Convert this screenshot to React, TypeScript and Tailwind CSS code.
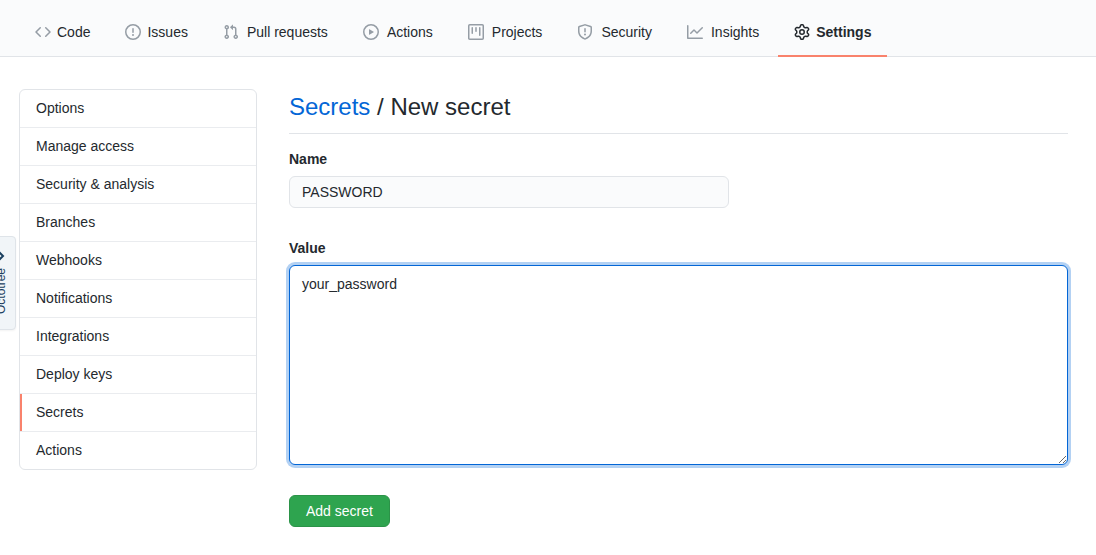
import { useState } from 'react';
import type { ReactNode } from 'react';

function Octicon({ children }: { children: ReactNode }) {
  return (
    <svg viewBox="0 0 16 16" width="16" height="16" fill="currentColor" fillRule="evenodd" aria-hidden="true" className="shrink-0">
      {children}
    </svg>
  );
}

const tabs: { label: string; gap: string; icon: ReactNode }[] = [
  {
    label: 'Code',
    gap: 'gap-1.5',
    icon: (
      <path d="M4.72 3.22a.75.75 0 011.06 1.06L2.06 8l3.72 3.72a.75.75 0 11-1.06 1.06L.47 8.53a.75.75 0 010-1.06l4.25-4.25zm6.56 0a.75.75 0 10-1.06 1.06L13.94 8l-3.72 3.72a.75.75 0 101.06 1.06l4.25-4.25a.75.75 0 000-1.06l-4.25-4.25z" />
    ),
  },
  {
    label: 'Issues',
    gap: 'gap-1.5',
    icon: (
      <path d="M8 1.5a6.5 6.5 0 100 13 6.5 6.5 0 000-13zM0 8a8 8 0 1116 0A8 8 0 010 8zm9 3a1 1 0 11-2 0 1 1 0 012 0zm-.25-6.25a.75.75 0 00-1.5 0v3.5a.75.75 0 001.5 0v-3.5z" />
    ),
  },
  {
    label: 'Pull requests',
    gap: 'gap-2',
    icon: (
      <path d="M7.177 3.073L9.573.677A.25.25 0 0110 .854v4.792a.25.25 0 01-.427.177L7.177 3.427a.25.25 0 010-.354zM3.75 2.5a.75.75 0 100 1.5.75.75 0 000-1.5zm-2.25.75a2.25 2.25 0 113 2.122v5.256a2.251 2.251 0 11-1.5 0V5.372A2.25 2.25 0 011.5 3.25zM11 2.5h-1V4h1a1 1 0 011 1v5.628a2.251 2.251 0 101.5 0V5A2.5 2.5 0 0011 2.5zm1 10.25a.75.75 0 111.5 0 .75.75 0 01-1.5 0zM3.75 12a.75.75 0 100 1.5.75.75 0 000-1.5z" />
    ),
  },
  {
    label: 'Actions',
    gap: 'gap-2',
    icon: (
      <path d="M1.5 8a6.5 6.5 0 1113 0 6.5 6.5 0 01-13 0zM8 0a8 8 0 100 16A8 8 0 008 0zM6.379 5.227A.25.25 0 006 5.442v5.117a.25.25 0 00.379.214l4.264-2.559a.25.25 0 000-.428L6.379 5.227z" />
    ),
  },
  {
    label: 'Projects',
    gap: 'gap-2',
    icon: (
      <path d="M1.75 0A1.75 1.75 0 000 1.75v12.5C0 15.216.784 16 1.75 16h12.5A1.75 1.75 0 0016 14.25V1.75A1.75 1.75 0 0014.25 0H1.75zM1.5 1.75a.25.25 0 01.25-.25h12.5a.25.25 0 01.25.25v12.5a.25.25 0 01-.25.25H1.75a.25.25 0 01-.25-.25V1.75zM11.75 3a.75.75 0 00-.75.75v7.5a.75.75 0 001.5 0v-7.5a.75.75 0 00-.75-.75zm-8.25.75a.75.75 0 011.5 0v5.5a.75.75 0 01-1.5 0v-5.5zM8 3a.75.75 0 00-.75.75v3.5a.75.75 0 001.5 0v-3.5A.75.75 0 008 3z" />
    ),
  },
  {
    label: 'Security',
    gap: 'gap-2',
    icon: (
      <path d="M7.467.133a1.75 1.75 0 011.066 0l5.25 1.68A1.75 1.75 0 0115 3.48V7c0 1.566-.32 3.182-1.303 4.682-.983 1.498-2.585 2.813-5.032 3.855a1.7 1.7 0 01-1.33 0c-2.447-1.042-4.049-2.357-5.032-3.855C1.32 10.182 1 8.566 1 7V3.48a1.75 1.75 0 011.217-1.667l5.25-1.68zm.61 1.429a.25.25 0 00-.153 0l-5.25 1.68a.25.25 0 00-.174.238V7c0 1.358.275 2.666 1.057 3.86.784 1.194 2.121 2.34 4.366 3.297a.2.2 0 00.154 0c2.245-.956 3.582-2.104 4.366-3.298C13.225 9.666 13.5 8.36 13.5 7V3.48a.25.25 0 00-.174-.237l-5.25-1.68zM9 10.5a1 1 0 11-2 0 1 1 0 012 0zm-.25-5.75a.75.75 0 10-1.5 0v3a.75.75 0 001.5 0v-3z" />
    ),
  },
  {
    label: 'Insights',
    gap: 'gap-2',
    icon: (
      <path d="M1.5 1.75a.75.75 0 00-1.5 0v12.5c0 .414.336.75.75.75h14.5a.75.75 0 000-1.5H1.5V1.75zm14.28 2.53a.75.75 0 00-1.06-1.06L10 7.94 7.53 5.47a.75.75 0 00-1.06 0L3.22 8.72a.75.75 0 001.06 1.06L7 7.06l2.47 2.47a.75.75 0 001.06 0l5.25-5.25z" />
    ),
  },
  {
    label: 'Settings',
    gap: 'gap-1.5',
    icon: (
      <path d="M7.429 1.525a6.593 6.593 0 011.142 0c.036.003.108.036.137.146l.289 1.105c.147.56.55.967.997 1.189.174.086.341.183.501.29.417.278.97.423 1.53.27l1.102-.303c.11-.03.175.016.195.046.219.31.41.641.573.989.014.031.022.11-.059.19l-.815.806c-.411.406-.562.957-.53 1.456a4.588 4.588 0 010 .582c-.032.499.119 1.05.53 1.456l.815.806c.08.08.073.159.059.19a6.494 6.494 0 01-.573.99c-.02.029-.086.074-.195.045l-1.103-.303c-.559-.153-1.112-.008-1.529.27-.16.107-.327.204-.5.29-.449.222-.851.628-.998 1.189l-.289 1.105c-.029.11-.101.143-.137.146a6.613 6.613 0 01-1.142 0c-.036-.003-.108-.037-.137-.146l-.289-1.105c-.147-.56-.55-.967-.997-1.189a4.502 4.502 0 01-.501-.29c-.417-.278-.97-.423-1.53-.27l-1.102.303c-.11.03-.175-.016-.195-.046a6.492 6.492 0 01-.573-.989c-.014-.031-.022-.11.059-.19l.815-.806c.411-.406.562-.957.53-1.456a4.587 4.587 0 010-.582c.032-.499-.119-1.05-.53-1.456l-.815-.806c-.08-.08-.073-.159-.059-.19a6.44 6.44 0 01.573-.99c.02-.029.086-.075.195-.045l1.103.303c.559.153 1.112.008 1.529-.27.16-.107.327-.204.5-.29.449-.222.851-.628.998-1.189l.289-1.105c.029-.11.101-.143.137-.146zM8 0c-.236 0-.47.01-.701.03-.743.065-1.29.615-1.458 1.261l-.29 1.106c-.017.066-.078.158-.211.224a5.994 5.994 0 00-.668.386c-.123.082-.233.09-.3.071L3.27 2.776c-.644-.177-1.392.02-1.82.63a7.977 7.977 0 00-.704 1.217c-.315.675-.111 1.422.363 1.891l.815.806c.05.048.098.147.088.294a6.084 6.084 0 000 .772c.01.147-.038.246-.088.294l-.815.806c-.474.469-.678 1.216-.363 1.891.2.428.436.835.704 1.218.428.609 1.176.806 1.82.63l1.103-.303c.066-.019.176-.011.299.071.213.143.436.272.668.386.133.066.194.158.212.224l.289 1.106c.169.646.715 1.196 1.458 1.26a8.094 8.094 0 001.402 0c.743-.064 1.29-.614 1.458-1.26l.29-1.106c.017-.066.078-.158.211-.224a5.98 5.98 0 00.668-.386c.123-.082.233-.09.3-.071l1.102.302c.644.177 1.392-.02 1.82-.63.268-.382.505-.789.704-1.217.315-.675.111-1.422-.364-1.891l-.814-.806c-.05-.048-.098-.147-.088-.294a6.1 6.1 0 000-.772c-.01-.147.039-.246.088-.294l.814-.806c.475-.469.679-1.216.364-1.891a7.992 7.992 0 00-.704-1.218c-.428-.609-1.176-.806-1.82-.63l-1.103.303c-.066.019-.176.011-.299-.071a5.991 5.991 0 00-.668-.386c-.133-.066-.194-.158-.212-.224L10.16 1.29C9.99.645 9.444.095 8.701.031A8.094 8.094 0 008 0zm1.5 8a1.5 1.5 0 11-3 0 1.5 1.5 0 013 0zM11 8a3 3 0 11-6 0 3 3 0 016 0z" />
    ),
  },
];

const menu = [
  'Options',
  'Manage access',
  'Security & analysis',
  'Branches',
  'Webhooks',
  'Notifications',
  'Integrations',
  'Deploy keys',
  'Secrets',
  'Actions',
];

export default function App() {
  const [name, setName] = useState('PASSWORD');
  const [value, setValue] = useState('your_password');

  return (
    <div className="relative min-h-screen overflow-x-hidden bg-white font-['Liberation_Sans',Arial,sans-serif] text-sm text-[#24292e]">
      <header className="border-b border-[#e1e4e8] bg-[#fafbfc]">
        <nav aria-label="Repository" className="-mb-px flex gap-[3px] pt-2 pl-[19px]">
          {tabs.map(({ label, gap, icon }) => {
            const active = label === 'Settings';
            return (
              <a
                key={label}
                href="#"
                aria-current={active ? 'page' : undefined}
                className={`flex h-[49px] shrink-0 items-center border-b-2 px-4 ${gap} ${
                  active ? 'border-[#f9826c] font-bold' : 'border-transparent'
                }`}
              >
                <span className={active ? 'text-[#24292e]' : 'text-[#959da5]'}>
                  <Octicon>{icon}</Octicon>
                </span>
                {label}
              </a>
            );
          })}
        </nav>
      </header>

      <div className="flex items-start gap-8 pt-8 pr-7 pb-7 pl-[19px]">
        <nav aria-label="Settings" className="w-[238px] shrink-0 overflow-hidden rounded-md border border-[#e1e4e8]">
          {menu.map((item) => (
            <a
              key={item}
              href="#"
              aria-current={item === 'Secrets' ? 'page' : undefined}
              className="relative block border-b border-[#eaecef] px-4 py-2 leading-[21px] last:border-b-0"
            >
              {item === 'Secrets' && <span className="absolute inset-y-0 left-0 w-0.5 bg-[#f9826c]" />}
              {item}
            </a>
          ))}
        </nav>

        <main className="min-w-0 flex-1">
          <h1 className="border-b border-[#e1e4e8] pb-2 text-2xl leading-9">
            <a href="#" className="text-[#0366d6]">
              Secrets
            </a>{' '}
            / New secret
          </h1>
          <form className="flex flex-col items-start pt-[15px]" onSubmit={(event) => event.preventDefault()}>
            <label htmlFor="secret-name" className="mb-[7px] font-bold">
              Name
            </label>
            <input
              id="secret-name"
              type="text"
              value={name}
              onChange={(event) => setName(event.target.value)}
              className="h-8 w-full max-w-[440px] rounded-md border border-[#e1e4e8] bg-[#fafbfc] px-3 outline-none"
            />
            <label htmlFor="secret-value" className="mt-[30px] mb-[7px] font-bold">
              Value
            </label>
            <textarea
              id="secret-value"
              value={value}
              onChange={(event) => setValue(event.target.value)}
              className="h-[200px] w-full resize-y rounded-md border border-[#0366d6] bg-white px-3 py-2 leading-[21px] shadow-[0_0_0_3px_rgba(3,102,214,0.3)] outline-none"
            />
            <button
              type="submit"
              className="mt-[30px] h-8 rounded-md border border-[#2b9348] bg-[#2ea44f] px-4 text-white"
            >
              Add secret
            </button>
          </form>
        </main>
      </div>

      <button
        type="button"
        className="absolute top-[236px] -left-[14px] flex h-[94px] w-[30px] flex-col items-center gap-[7px] rounded-r border border-[#dfe4e9] bg-[#f1f5f8] pt-3.5 text-xs text-[#1b4060] shadow-xs"
      >
        <svg viewBox="0 0 10 10" width="10" height="10" fill="none" stroke="currentColor" strokeWidth="2" aria-hidden="true" className="shrink-0">
          <path d="M3 1l4 4-4 4" />
        </svg>
        <span className="rotate-180 leading-4 [writing-mode:vertical-rl]">Octotree</span>
      </button>
    </div>
  );
}
